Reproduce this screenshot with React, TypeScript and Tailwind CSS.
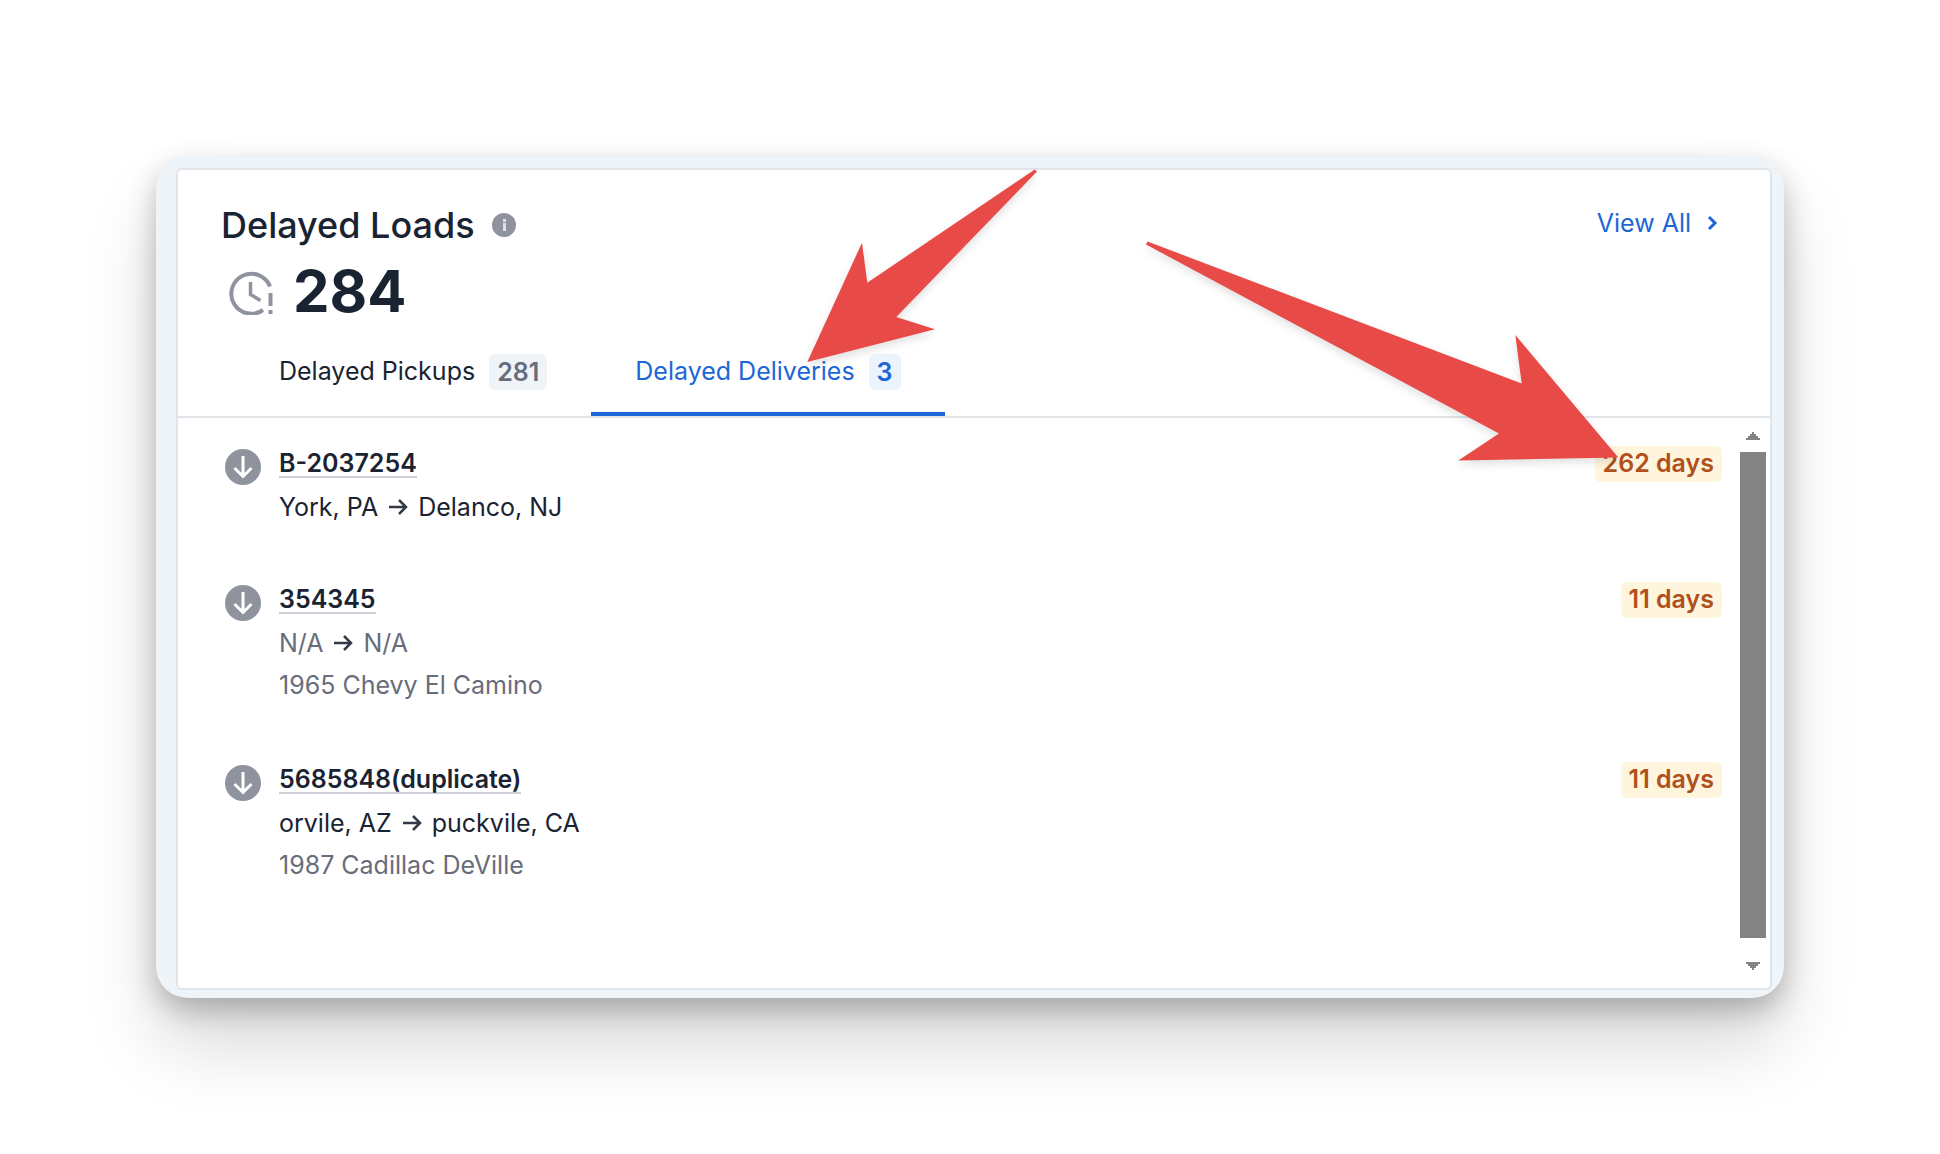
import React from 'react'

type Load = {
    id: string
    origin: string
    destination: string
    vehicle?: string
    delay: string
    muted?: boolean
}

const loads: Load[] = [
    { id: 'B-2037254', origin: 'York, PA', destination: 'Delanco, NJ', delay: '262 days' },
    { id: '354345', origin: 'N/A', destination: 'N/A', vehicle: '1965 Chevy El Camino', delay: '11 days', muted: true },
    { id: '5685848(duplicate)', origin: 'orvile, AZ', destination: 'puckvile, CA', vehicle: '1987 Cadillac DeVille', delay: '11 days' },
]

export default function App() {
    return (
        <main className="min-h-screen bg-white p-[156px] font-['Inter',sans-serif] text-[25px] text-[#1a2332]">
            <div className="rounded-[32px] bg-[#eff4f8] pt-3 pr-3 pb-2 pl-5 shadow-[0_48px_72px_rgba(0,0,0,0.15),0_12px_28px_rgba(0,0,0,0.24)]">
                <section className="relative rounded-md border-2 border-[#e1e5ea] bg-white">
                    <header className="pt-[33px] pr-12 pl-[43px]">
                        <div className="flex items-start justify-between">
                            <div className="flex items-center gap-4">
                                <h1 className="text-[36px] leading-11 font-medium">Delayed Loads</h1>
                                <button aria-label="About delayed loads">
                                    <InfoIcon />
                                </button>
                            </div>
                            <a href="#all" className="flex items-center gap-4 leading-10 text-[#1d66d6]">
                                View All
                                <ChevronIcon />
                            </a>
                        </div>
                        <div className="mt-2 mb-[5px] flex items-center gap-4 pl-1.5">
                            <ClockAlertIcon />
                            <span className="text-[58px] leading-[72px] font-bold">284</span>
                        </div>
                    </header>

                    <div role="tablist" className="flex border-b-2 border-[#e1e5ea] pl-[57px]">
                        <Tab label="Delayed Pickups" count={281} />
                        <Tab label="Delayed Deliveries" count={3} active />
                    </div>

                    <div className="flex">
                        <ul className="flex grow flex-col gap-[53px] pt-7 pr-[18px] pb-[99px] pl-[46px]">
                            {loads.map((load) => (
                                <LoadRow key={load.id} load={load} />
                            ))}
                        </ul>
                        <ScrollTrack />
                    </div>

                    <svg className="absolute top-0 left-[622px] overflow-visible drop-shadow-[0_4px_4px_rgba(0,0,0,0.12)]" width="240" height="200" viewBox="800 170 240 200" aria-hidden="true">
                        <path d="M807.3 362 862 242.7 867.3 282.7 1034.7 169.5 1037 171.5 896.3 317 935 329.3Z" fill="#e84a47" />
                    </svg>
                    <svg className="absolute top-[66px] right-[150px] overflow-visible drop-shadow-[0_4px_4px_rgba(0,0,0,0.12)]" width="480" height="230" viewBox="1140 236 480 230" aria-hidden="true">
                        <path d="M1147.5 241.5 1521.7 383.5 1515.3 335 1618.3 457.5 1458.3 460.5 1499 433.4 1146 244.5Z" fill="#e84a47" />
                    </svg>
                </section>
            </div>
        </main>
    )
}

function Tab({ label, count, active }: { label: string; count: number; active?: boolean }) {
    return (
        <button
            role="tab"
            aria-selected={!!active}
            className={`flex h-21 items-center gap-3.5 border-b-4 px-11 ${active ? 'border-[#1d66d6] text-[#1d66d6]' : 'border-transparent'}`}
        >
            {label}
            <span className={`rounded-md px-2 leading-9 font-semibold ${active ? 'bg-[#ebf3fd]' : 'bg-[#eff4f8] text-[#676d7a]'}`}>
                {count}
            </span>
        </button>
    )
}

function LoadRow({ load }: { load: Load }) {
    return (
        <li className="flex items-start">
            <ArrowDownIcon />
            <div className="ml-[17px] grow">
                <div className="flex h-9 items-center">
                    <a href="#load" className="border-b-2 border-[#cdd2da] leading-[26px] font-semibold">{load.id}</a>
                </div>
                <div className={`mt-[3px] flex items-center gap-[9px] leading-11 ${load.muted ? 'text-[#676d7a]' : ''}`}>
                    {load.origin}
                    <ArrowRightIcon />
                    {load.destination}
                </div>
                {load.vehicle && <div className="pb-1 leading-10 text-[#676d7a]">{load.vehicle}</div>}
            </div>
            <span className="rounded-md bg-[#fff5dc] px-2 pb-0.5 leading-[34px] font-semibold text-[#b0501c]">{load.delay}</span>
        </li>
    )
}

function ScrollTrack() {
    return (
        <div className="mr-1 flex w-[26px] flex-col items-center pt-3.5 pb-[18px]" aria-hidden="true">
            <svg width="14" height="8" viewBox="0 0 14 8" fill="#838383" shapeRendering="crispEdges">
                <path d="M6 0h2v2h2v2h2v2h2v2H0V6h2V4h2V2h2z" />
            </svg>
            <div className="mt-3 mb-6 w-full grow bg-[#838383]" />
            <svg width="14" height="8" viewBox="0 0 14 8" fill="#838383" shapeRendering="crispEdges">
                <path d="M6 8h2V6h2V4h2V2h2V0H0v2h2v2h2v2h2z" />
            </svg>
        </div>
    )
}

function InfoIcon() {
    return (
        <svg width="26" height="26" viewBox="0 0 26 26" className="block">
            <circle cx="13" cy="13" r="12" fill="#8f939d" />
            <path d="M12 7h3v3h-3zM12 11h3v8h-3z" fill="#dfe1e5" />
        </svg>
    )
}

function ChevronIcon() {
    return (
        <svg width="15" height="16" viewBox="0 0 15 16" fill="none" stroke="#1d66d6" strokeWidth="3">
            <path d="M2 2l6 6-6 6" />
        </svg>
    )
}

function ClockAlertIcon() {
    return (
        <svg width="50" height="48" viewBox="0 0 50 48" fill="none" stroke="#8f939d" strokeWidth="4">
            <path d="M42 17.5A20 20 0 1 0 35 41" transform="translate(1 2)" />
            <path d="M23.500 15v12.500l10 6" strokeWidth="3.500" />
            <path d="M43.500 26v13M43.500 43v4" />
        </svg>
    )
}

function ArrowDownIcon() {
    return (
        <svg width="38" height="38" viewBox="0 0 38 38" fill="none" className="mt-0.5">
            <circle cx="19" cy="19" r="18" fill="#8f939d" />
            <path d="M19 8v20M10.500 20l8.500 8.500 8.500-8.500" stroke="#fff" strokeWidth="3" />
        </svg>
    )
}

function ArrowRightIcon() {
    return (
        <svg width="22" height="18" viewBox="0 0 22 18" fill="none" stroke="#333a48" strokeWidth="2.500">
            <path d="M2 9h17M12 2l7 7-7 7" />
        </svg>
    )
}
